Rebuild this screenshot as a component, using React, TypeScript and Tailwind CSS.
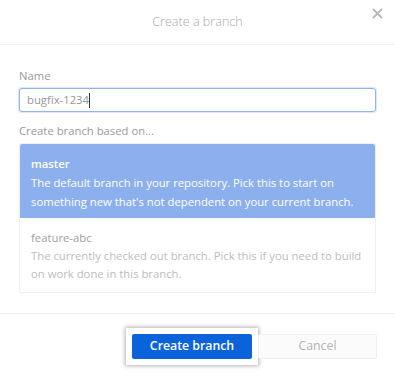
const font = { fontFamily: '"Open Sans", "Noto Sans", sans-serif' };

const branches = [
  {
    name: 'master',
    description:
      "The default branch in your repository. Pick this to start on something new that's not dependent on your current branch.",
    selected: true,
  },
  {
    name: 'feature-abc',
    description:
      'The currently checked out branch. Pick this if you need to build on work done in this branch.',
    selected: false,
  },
];

const App = () => {
  return (
    <div className="w-[395px] h-[379px] bg-white text-[11.3px]" style={font}>
      <div className="relative h-[45px] border-b border-[#ededed] flex items-center justify-center">
        <div className="text-[12.6px] text-[#a9a9a9] font-light">Create a branch</div>
        <svg
          className="absolute right-[12px] top-[8px]"
          width="11"
          height="11"
          viewBox="0 0 11 11"
        >
          <path d="M1 1L10 10M10 1L1 10" stroke="#b4b9c0" strokeWidth="1.8" />
        </svg>
      </div>

      <div className="px-[19px] pt-[22px]">
        <div className="text-[#999] leading-[18px]">Name</div>
        <div className="mt-[3px] h-[24px] border border-[#8fb4f0] rounded-[3px] shadow-[0_0_0_1px_#dbe7fb] flex items-center px-[7px] text-[#999]">
          bugfix-1234
          <span className="w-px h-[15px] bg-[#333]" />
        </div>
        <div className="mt-[10px] text-[#999] leading-[18px]">Create branch based on...</div>
        <div className="mt-[3px] border border-[#f0f0f0] rounded-[2px]">
          {branches.map((b) => (
            <div
              key={b.name}
              className={
                b.selected
                  ? 'bg-[#8cb0ee] text-white pl-[11px] pr-[10px] pt-[10px] pb-[7px] leading-[19px] rounded-t-[2px]'
                  : 'text-[#bdbdbd] pl-[11px] pr-[10px] pt-[11px] pb-[9px] leading-[18px]'
              }
            >
              <div className={b.selected ? 'font-semibold' : 'text-[#9e9e9e]'}>{b.name}</div>
              <div>{b.description}</div>
            </div>
          ))}
        </div>
      </div>

      <div className="mt-[20px] border-t border-[#ededed] flex justify-end gap-[6px] pl-[19px] pr-[18px] pt-[20px]">
        <div className="p-[6px] -m-[6px] shadow-[0_0_4px_1px_rgba(0,0,0,0.3)] bg-white">
          <button className="w-[120px] h-[25px] bg-[#0b63dc] text-white text-[12.3px] font-semibold rounded-[2px]">
            Create branch
          </button>
        </div>
        <button className="w-[119px] h-[25px] bg-[#fbfbfb] border border-[#efefef] text-[#b3b3b3] text-[12.3px] rounded-[2px]">
          Cancel
        </button>
      </div>
    </div>
  );
};

export default App;
